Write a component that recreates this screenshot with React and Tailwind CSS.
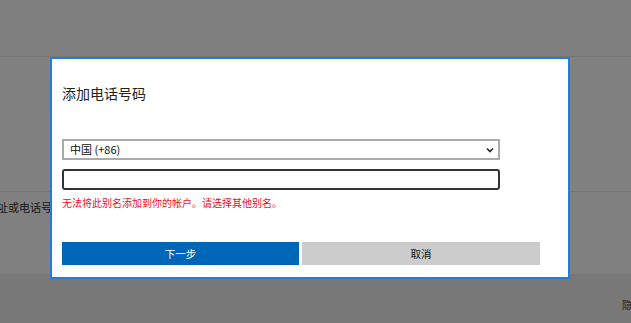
import React from 'react';

export default function App() {
  return (
    <main
      className="relative w-[631px] h-[323px] overflow-hidden bg-[#808080]"
      style={{ fontFamily: '"Noto Sans CJK SC", "Liberation Sans", sans-serif' }}
    >
      {/* Page behind the overlay */}
      <header className="h-[57px] bg-[#7f7f7f] border-b border-[#767676]" />
      <section className="h-[135px] bg-[#808080] border-b border-[#767676]" />
      <div className="h-[82px] bg-[#808080] pt-[7px]">
        <div className="ml-[-14px] whitespace-nowrap text-[11px] leading-[16px] text-[#141414]">地址或电话号码</div>
      </div>
      <footer className="h-[49px] bg-[#787878] flex justify-end items-start pt-[24px]">
        <span className="mr-[-11px] text-[10px] leading-[14px] text-[#1a1a1a]">隐私</span>
      </footer>

      {/* Dialog */}
      <div className="absolute left-[50px] top-[57px] w-[520px] h-[222px] border-2 border-[#1e7fd9] bg-white px-[10px]">
        <h2 className="mt-[24px] h-[20px] text-[14px] leading-[20px] text-[#222] font-normal">添加电话号码</h2>

        <div className="mt-[36px] w-[438px] h-[21px] border-2 border-[#ababab] flex items-center justify-between pl-[6px] pr-[4px]">
          <span className="text-[11px] text-[#111]">中国 (+86)</span>
          <svg width="8" height="6" viewBox="0 0 8 6">
            <path d="M1 1.5 L4 4.5 L7 1.5" fill="none" stroke="#222" strokeWidth="1.6" />
          </svg>
        </div>

        <div className="mt-[9px] w-[438px] h-[21px] border-2 border-[#333] rounded-[3px]" />

        <p className="mt-[6px] text-[10px] leading-[14px] text-[#e81123]">无法将此别名添加到你的帐户。请选择其他别名。</p>

        <div className="mt-[32px] flex gap-[3px] w-[478px]">
          <button className="w-[237px] h-[23px] bg-[#0067b8] text-white text-[10.5px] leading-[23px]">下一步</button>
          <button className="w-[238px] h-[23px] bg-[#cccccc] text-[#111] text-[10.5px] leading-[23px]">取消</button>
        </div>
      </div>
    </main>
  );
}
